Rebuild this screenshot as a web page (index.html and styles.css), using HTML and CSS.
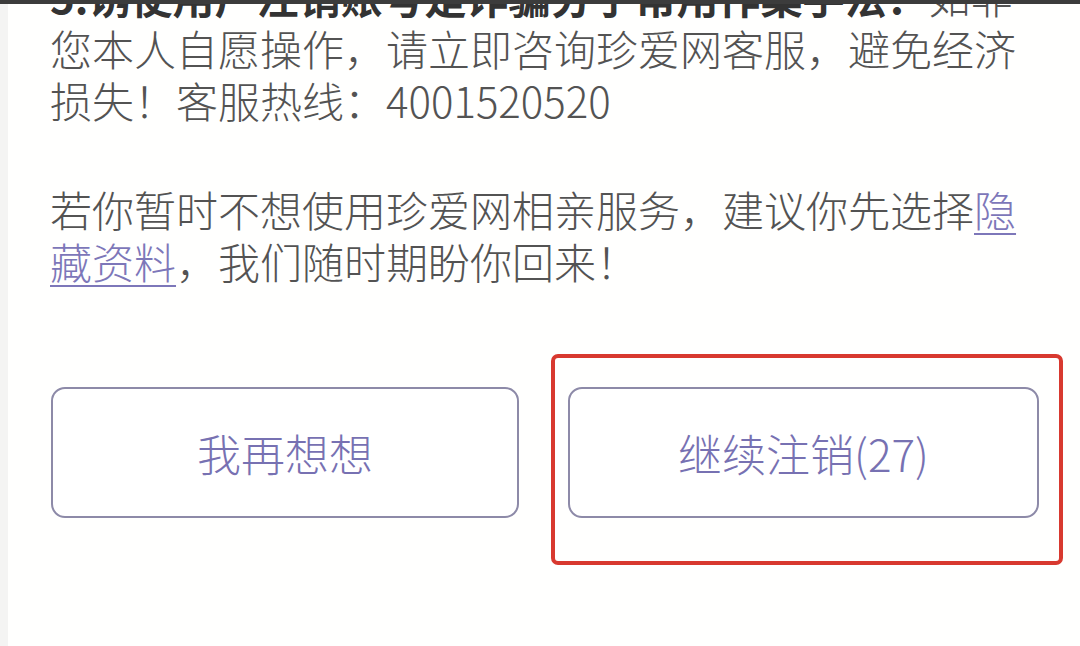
FILE: index.html
```html
<!DOCTYPE html>
<html lang="zh-CN">
<head>
<meta charset="utf-8">
<title>注销账号</title>
<link rel="stylesheet" href="styles.css">
</head>
<body>
<div class="topbar"></div>
<main class="page">
  <div class="content">
    <p class="para"><span class="warn">5.诱使用户注销账号是诈骗分子常用作案手法：</span>如非您本人自愿操作，请立即咨询珍爱网客服，避免经济损失！客服热线：4001520520</p>
    <p class="para para-gap">若你暂时不想使用珍爱网相亲服务，建议你先选择<a class="link" href="#">隐藏资料</a>，我们随时期盼你回来！</p>
  </div>
  <div class="actions">
    <button class="btn btn-left">我再想想</button>
    <div class="btn-wrap">
      <button class="btn">继续注销(27)</button>
      <span class="highlight"></span>
    </div>
  </div>
</main>
</body>
</html>
```

FILE: styles.css
```css
html, body {
  margin: 0;
  padding: 0;
  height: 100%;
  overflow: hidden;
  background: #fffffe;
}

body {
  font-family: "Noto Sans CJK SC", "Noto Sans", sans-serif;
  color: #535353;
  position: relative;
}

.topbar {
  position: absolute;
  top: 0;
  left: 0;
  right: 0;
  height: 4px;
  background: #3c3c3c;
  z-index: 2;
}

.page {
  box-sizing: border-box;
  height: 100%;
  display: flex;
  flex-direction: column;
  padding: 0 41px 0 42px;
  border-left: 8px solid #f4f4f3;
}

.content {
  margin-top: -30px;
  font-size: 42px;
  line-height: 52px;
  font-weight: 300;
}

.para {
  margin: 0;
}

.para-gap {
  margin-top: 57px;
}

.warn {
  font-weight: 700;
  color: #333333;
}

.link {
  color: #7d77b9;
  text-decoration: underline;
  text-decoration-thickness: 2px;
  text-underline-offset: 6px;
}

.actions {
  display: flex;
  gap: 49px;
  margin-top: 100px;
  padding-left: 1px;
}

.btn {
  box-sizing: border-box;
  flex: 1;
  height: 131px;
  border: 2px solid #8d8aa8;
  border-radius: 14px;
  background: #ffffff;
  color: #7771b2;
  font-family: "Noto Sans CJK SC", "Noto Sans", sans-serif;
  font-size: 44px;
  font-weight: 300;
  padding: 0;
}

.btn-left {
  flex: 0 0 468px;
}

.btn-wrap {
  flex: 1;
  display: flex;
  position: relative;
}

.highlight {
  position: absolute;
  top: -33px;
  bottom: -47px;
  left: -17px;
  right: -24px;
  border: 4px solid #d8392f;
  border-radius: 7px;
  pointer-events: none;
}
```
